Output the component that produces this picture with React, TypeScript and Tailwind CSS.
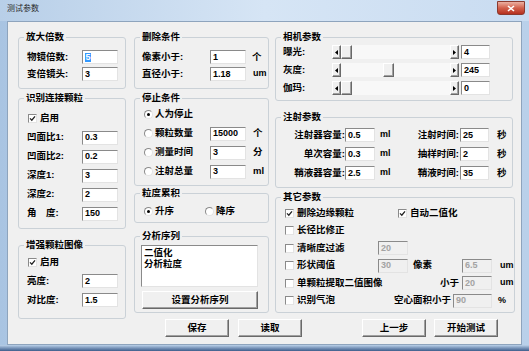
import React from 'react'

const sunken =
  'border border-t-[#8a8a8a] border-l-[#8a8a8a] border-r-[#e3e3e3] border-b-[#e3e3e3]'
const raised =
  'border border-t-white border-l-white border-r-[#696969] border-b-[#696969] shadow-[inset_-1px_-1px_0_#a0a0a0]'

type FieldProps = { value: string; w?: string; h?: string; disabled?: boolean; selected?: boolean }

const Field = ({ value, w = 'w-[36px]', h = 'h-[14px]', disabled, selected }: FieldProps) => (
  <div
    className={`${w} ${h} shrink-0 ${sunken} flex items-center pl-[2px] text-[9px] leading-none ${
      disabled ? 'bg-[#f0f0f0] text-[#a3a3a3]' : 'bg-white text-black'
    }`}
  >
    {selected ? <span className="bg-[#3399ff] text-white px-[0.5px]">{value}</span> : value}
  </div>
)

const Check = ({ on }: { on?: boolean }) => (
  <span className={`w-[9px] h-[9px] shrink-0 ${sunken} bg-white flex items-center justify-center`}>
    {on && (
      <svg width="7" height="7" viewBox="0 0 7 7">
        <path d="M1 3.4 L2.8 5.2 L6 1.4" fill="none" stroke="#222" strokeWidth="1.3" />
      </svg>
    )}
  </span>
)

const Radio = ({ on }: { on?: boolean }) => (
  <span className="w-[9px] h-[9px] shrink-0 rounded-full border border-t-[#8a8a8a] border-l-[#8a8a8a] border-r-[#e3e3e3] border-b-[#e3e3e3] bg-white flex items-center justify-center">
    {on && <span className="w-[3px] h-[3px] rounded-full bg-black" />}
  </span>
)

const Group = ({
  title,
  className = '',
  children,
}: {
  title: string
  className?: string
  children?: React.ReactNode
}) => (
  <fieldset className={`border border-[#cad1d7] rounded-[3px] ${className}`}>
    <legend className="ml-[5px] px-[2px] leading-[12px]">{title}</legend>
    {children}
  </fieldset>
)

const Arrow = ({ dir }: { dir: 'l' | 'r' }) => (
  <div className={`w-[9px] h-full shrink-0 ${raised} bg-[#f0f0f0] flex items-center justify-center`}>
    <svg width="3" height="5" viewBox="0 0 3 5">
      <path d={dir === 'l' ? 'M3 0 L0 2.5 L3 5 Z' : 'M0 0 L3 2.5 L0 5 Z'} fill="#000" />
    </svg>
  </div>
)

const Slider = ({ offset }: { offset: string }) => (
  <div className="w-[127px] h-[14px] shrink-0 flex bg-[#f8f8f8]">
    <Arrow dir="l" />
    <div className="flex-1 flex">
      <div className={`${offset} w-[11px] h-full ${raised} bg-[#f0f0f0]`} />
    </div>
    <Arrow dir="r" />
  </div>
)

const Btn = ({ label, className = '' }: { label: string; className?: string }) => (
  <button className={`w-[64px] h-[18px] ${raised} bg-[#f0f0f0] flex items-center justify-center leading-none ${className}`}>
    {label}
  </button>
)

export default function App() {
  return (
    <div className="w-[529px] h-[351px] overflow-hidden whitespace-nowrap flex flex-col bg-gradient-to-r from-[#a9c4e2] via-[#cadcf0] to-[#b9d0ea] font-['Liberation_Sans','Noto_Sans_CJK_SC',sans-serif] font-bold text-[9.5px] text-black">
      {/* title bar */}
      <div className="h-[21px] shrink-0 flex items-start justify-between bg-gradient-to-r from-[#b8cfe8] via-[#d6e5f5] to-[#c9dcf1]">
        <span className="ml-[7px] mt-[5px] text-[8px] font-normal text-[#2a2a2a] leading-none">测试参数</span>
        <div className="mr-[4px] mt-[1px] w-[28px] h-[14px] rounded-b-[3px] border border-[#8b3a2f] bg-gradient-to-b from-[#eab0a2] via-[#d2604c] to-[#b52f1d] flex items-center justify-center">
          <svg width="8" height="7" viewBox="0 0 8 7">
            <path d="M1 1 L7 6 M7 1 L1 6" stroke="#fff" strokeWidth="1.6" />
          </svg>
        </div>
      </div>

      {/* client */}
      <div className="flex-1 px-[7px] flex flex-col">
        <div className="h-[324px] border border-[#8ea4bd] bg-[#f0f0f0] pt-[9px] pl-[10px] flex">
          {/* left column */}
          <div className="w-[108px] shrink-0 flex flex-col">
            <Group title="放大倍数" className="h-[58px]">
              <div className="pl-[8px] pt-[7px] flex flex-col gap-[3px]">
                <div className="flex items-center h-[14px]">
                  <span className="w-[55px]">物镜倍数:</span>
                  <Field value="5" selected />
                </div>
                <div className="flex items-center h-[14px]">
                  <span className="w-[55px]">变倍镜头:</span>
                  <Field value="3" />
                </div>
              </div>
            </Group>

            <Group title="识别连接颗粒" className="h-[137px] mt-[3px]">
              <div className="pl-[8px] pt-[7px] flex flex-col gap-[4px]">
                <div className="flex items-center h-[15px] pl-[1px] gap-[3px]">
                  <Check on />
                  <span>启用</span>
                </div>
                {[
                  ['凹面比1:', '0.3'],
                  ['凹面比2:', '0.2'],
                  ['深度1:', '3'],
                  ['深度2:', '2'],
                  ['角\u3000度:', '150'],
                ].map(([l, v]) => (
                  <div key={l} className="flex items-center h-[15px]">
                    <span className="w-[55px]">{l}</span>
                    <Field value={v} />
                  </div>
                ))}
              </div>
            </Group>

            <Group title="增强颗粒图像" className="h-[80px] mt-[10px]">
              <div className="pl-[8px] pt-[4px] flex flex-col gap-[5px]">
                <div className="flex items-center h-[14px] pl-[1px] gap-[3px]">
                  <Check on />
                  <span>启用</span>
                </div>
                <div className="flex items-center h-[14px]">
                  <span className="w-[55px]">亮度:</span>
                  <Field value="2" />
                </div>
                <div className="flex items-center h-[14px]">
                  <span className="w-[55px]">对比度:</span>
                  <Field value="1.5" />
                </div>
              </div>
            </Group>
          </div>

          {/* right area */}
          <div className="ml-[8px] w-[379px] flex flex-col">
            <div className="flex">
              {/* middle column */}
              <div className="w-[135px] shrink-0 flex flex-col">
                <Group title="删除条件" className="h-[58px]">
                  <div className="pl-[7px] pt-[7px] flex flex-col gap-[3px]">
                    <div className="flex items-center h-[14px]">
                      <span className="w-[68px]">像素小于:</span>
                      <Field value="1" />
                      <span className="ml-[6px]">个</span>
                    </div>
                    <div className="flex items-center h-[14px]">
                      <span className="w-[68px]">直径小于:</span>
                      <Field value="1.18" />
                      <span className="ml-[7px] text-[9px]">um</span>
                    </div>
                  </div>
                </Group>

                <Group title="停止条件" className="h-[94px] mt-[3px]">
                  <div className="pl-[9px] pt-[3px] flex flex-col gap-[4px]">
                    <div className="flex items-center h-[15px] gap-[2px]">
                      <Radio on />
                      <span>人为停止</span>
                    </div>
                    {[
                      ['颗粒数量', '15000', '个'],
                      ['测量时间', '3', '分'],
                      ['注射总量', '3', 'ml'],
                    ].map(([l, v, u]) => (
                      <div key={l} className="flex items-center h-[15px] gap-[2px]">
                        <Radio />
                        <span className="w-[53px]">{l}</span>
                        <Field value={v} />
                        <span className="ml-[5px]">{u}</span>
                      </div>
                    ))}
                  </div>
                </Group>

                <Group title="粒度累积" className="h-[36px] mt-[1px]">
                  <div className="pl-[9px] pt-[5px] flex items-center h-[19px]">
                    <div className="w-[61px] flex items-center gap-[2px]">
                      <Radio on />
                      <span>升序</span>
                    </div>
                    <div className="flex items-center gap-[2px]">
                      <Radio />
                      <span>降序</span>
                    </div>
                  </div>
                </Group>

                <Group title="分析序列" className="h-[83px] mt-[7px]">
                  <div className="pl-[6px] pt-[3px] flex flex-col gap-[4px]">
                    <div className={`w-[117px] h-[42px] ${sunken} bg-white pl-[2px] pt-[1px] leading-[11px]`}>
                      <div>二值化</div>
                      <div>分析粒度</div>
                    </div>
                    <Btn label="设置分析序列" className="w-[116px] h-[16px] ml-[1px]" />
                  </div>
                </Group>
              </div>

              {/* right column */}
              <div className="ml-[6px] w-[238px] shrink-0 flex flex-col">
                <Group title="相机参数" className="h-[70px]">
                  <div className="pl-[7px] pt-[2px] flex flex-col gap-[4px]">
                    {[
                      ['曝光:', '4', 'ml-0'],
                      ['灰度:', '245', 'ml-[42px]'],
                      ['伽玛:', '0', 'ml-0'],
                    ].map(([l, v, o]) => (
                      <div key={l} className="flex items-center h-[14px]">
                        <span className="w-[49px]">{l}</span>
                        <Slider offset={o} />
                        <Field value={v} w="w-[29px] ml-[2px]" />
                      </div>
                    ))}
                  </div>
                </Group>

                <Group title="注射参数" className="h-[77px] mt-[10px]">
                  <div className="pt-[5px] flex flex-col gap-[5px]">
                    {[
                      ['注射器容量:', '0.5', '注射时间:', '25'],
                      ['单次容量:', '0.3', '抽样时间:', '2'],
                      ['鞘液器容量:', '2.5', '鞘液时间:', '35'],
                    ].map(([l, v, r, rv]) => (
                      <div key={l} className="flex items-center h-[14px]">
                        <span className="w-[69px] text-right">{l}</span>
                        <Field value={v} w="w-[30px]" />
                        <span className="w-[40px] pl-[5px] text-[9px]">ml</span>
                        <span className="w-[44px] text-right">{r}</span>
                        <Field value={rv} w="w-[29px] ml-[1px]" />
                        <span className="ml-[8px]">秒</span>
                      </div>
                    ))}
                  </div>
                </Group>

                <Group title="其它参数" className="h-[122px] mt-[3px]">
                  <div className="pl-[9px] pt-[3px] flex flex-col gap-[3.5px]">
                    <div className="flex items-center h-[14px]">
                      <div className="w-[113px] flex items-center gap-[3px]">
                        <Check on />
                        <span>删除边缘颗粒</span>
                      </div>
                      <div className="flex items-center gap-[3px]">
                        <Check on />
                        <span>自动二值化</span>
                      </div>
                    </div>
                    <div className="flex items-center h-[14px] gap-[3px]">
                      <Check />
                      <span>长径比修正</span>
                    </div>
                    <div className="flex items-center h-[14px]">
                      <div className="w-[93px] flex items-center gap-[3px]">
                        <Check />
                        <span>清晰度过滤</span>
                      </div>
                      <Field value="20" w="w-[30px]" disabled />
                    </div>
                    <div className="flex items-center h-[14px]">
                      <div className="w-[93px] flex items-center gap-[3px]">
                        <Check />
                        <span>形状阈值</span>
                      </div>
                      <Field value="30" w="w-[30px]" disabled />
                      <span className="ml-[5px] w-[49px]">像素</span>
                      <Field value="6.5" w="w-[30px]" disabled />
                      <span className="ml-[8px] text-[9px]">um</span>
                    </div>
                    <div className="flex items-center h-[14px]">
                      <div className="w-[153px] flex items-center gap-[3px]">
                        <Check />
                        <span>单颗粒提取二值图像</span>
                      </div>
                      <span className="w-[21px] text-right">小于</span>
                      <Field value="20" w="w-[30px] ml-[3px]" disabled />
                      <span className="ml-[8px] text-[9px]">um</span>
                    </div>
                    <div className="flex items-center h-[14px]">
                      <div className="w-[107px] flex items-center gap-[3px]">
                        <Check />
                        <span>识别气泡</span>
                      </div>
                      <span className="w-[59px] text-right">空心面积小于</span>
                      <Field value="90" w="w-[39px] ml-[2px]" disabled />
                      <span className="ml-[6px] text-[9px]">%</span>
                    </div>
                  </div>
                </Group>
              </div>
            </div>

            {/* buttons */}
            <div className="mt-[6px] flex">
              <Btn label="保存" className="ml-[31px]" />
              <Btn label="读取" className="ml-[9px]" />
              <Btn label="上一步" className="ml-[60px]" />
              <Btn label="开始测试" className="ml-[8px]" />
            </div>
          </div>
        </div>
      </div>
      <div className="h-[6px] shrink-0 bg-gradient-to-b from-[#bcd2ea] to-[#3e5e8c]" />
    </div>
  )
}
